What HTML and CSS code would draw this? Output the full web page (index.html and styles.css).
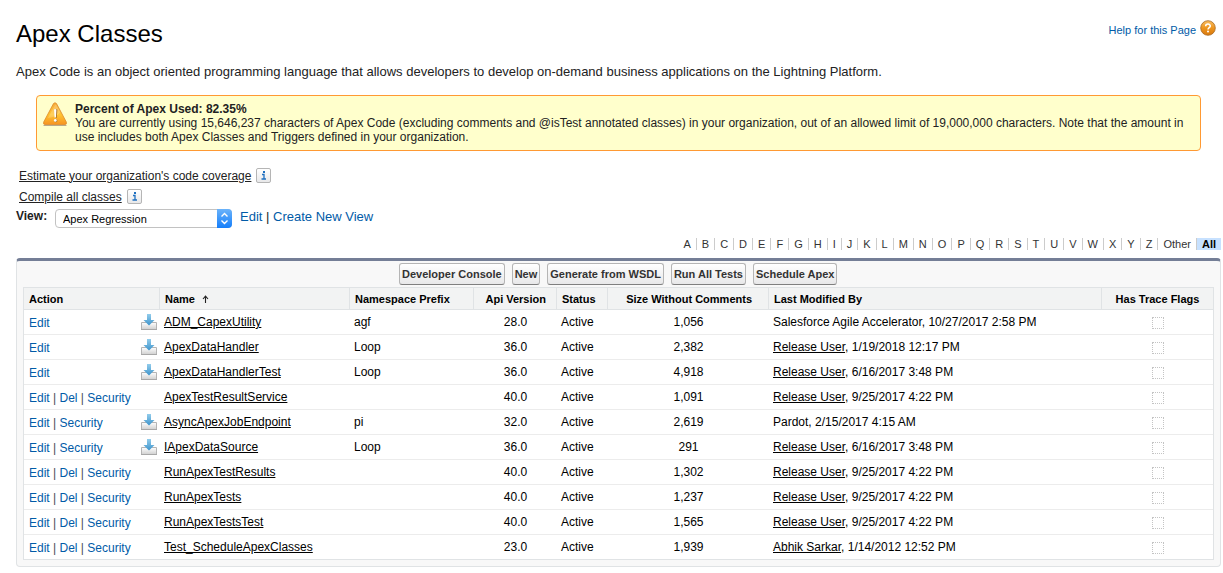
FILE: index.html
```html
<!DOCTYPE html>
<html lang="en">
<head>
<meta charset="utf-8">
<title>Apex Classes</title>
<link rel="stylesheet" href="styles.css">
</head>
<body>
<svg class="defs" width="0" height="0" aria-hidden="true">
  <defs>
    <linearGradient id="arrow-fill" x1="0" y1="0" x2="0" y2="1"><stop offset="0" stop-color="#93cdec"/><stop offset="1" stop-color="#3d94cc"/></linearGradient>
    <linearGradient id="tray-fill" x1="0" y1="0" x2="0" y2="1"><stop offset="0" stop-color="#ffffff"/><stop offset="1" stop-color="#cfcfcf"/></linearGradient>
    <symbol id="installed" viewBox="0 0 16 16">
      <path d="M.5 8.500H15.500V15.500H.5z" fill="url(#tray-fill)" stroke="#b4b4b4"/>
      <path d="M0 15.500H16" stroke="#a8a8a8"/>
      <path d="M6 0h4v6h3.500L8 11.500 2.500 6H6z" fill="url(#arrow-fill)"/>
    </symbol>
  </defs>
</svg>
<main class="page">
  <header class="page-head">
    <h1 class="title">Apex Classes</h1>
    <a class="help" href="#help">Help for this Page
      <svg class="help-icon" viewBox="0 0 16 16" aria-hidden="true">
        <defs><linearGradient id="help-fill" x1="0" y1="0" x2="0" y2="1"><stop offset="0" stop-color="#f8bd62"/><stop offset=".5" stop-color="#ed951f"/><stop offset="1" stop-color="#d9780c"/></linearGradient></defs>
        <circle cx="8" cy="8" r="7.300" fill="url(#help-fill)" stroke="#a86a24" stroke-width=".8"/>
        <path d="M5.700 6.200C5.700 3.400 10.300 3.400 10.300 6.100C10.300 7.700 8 7.700 8 9.500" fill="none" stroke="#fff" stroke-width="1.500"/>
        <circle cx="8" cy="11.600" r="1" fill="#fff"/>
      </svg>
    </a>
  </header>
  <p class="intro">Apex Code is an object oriented programming language that allows developers to develop on-demand business applications on the Lightning Platform.</p>
  <section class="warning">
    <svg class="warning-icon" viewBox="0 0 24 24" aria-hidden="true">
      <defs><linearGradient id="warn-fill" x1="0" y1="0" x2="0" y2="1"><stop offset="0" stop-color="#f6a93a"/><stop offset=".55" stop-color="#ffc431"/><stop offset="1" stop-color="#f79322"/></linearGradient></defs>
      <path d="M1 23.300H23" stroke="#b9a88a" stroke-width="1.200" stroke-linecap="round"/>
      <path d="M10.500 1.600Q12-.2 13.500 1.600L23.300 20Q24 22.500 22 22.500H2Q0 22.500.7 20z" fill="url(#warn-fill)" stroke="#dc8a2c" stroke-width=".8"/>
      <path d="M12 3L5 16Q13 15 17.500 10.500L13 2.500z" fill="#fff" opacity=".2"/>
      <path d="M11.600 7.500Q13 6.500 14.400 7.500L13.700 16H12.300z" fill="#a7722a"/>
      <path d="M11 7.500Q12.200 6.500 13.400 7.500L12.900 15.500H11.600z" fill="#fff"/>
      <circle cx="12.800" cy="18.700" r="1.600" fill="#a7722a"/><circle cx="12.300" cy="18.400" r="1.400" fill="#fff"/>
    </svg>
    <div class="warning-text"><strong>Percent of Apex Used: 82.35%</strong><br>You are currently using 15,646,237 characters of Apex Code (excluding comments and @isTest annotated classes) in your organization, out of an allowed limit of 19,000,000 characters. Note that the amount in use includes both Apex Classes and Triggers defined in your organization.</div>
  </section>
  <div class="tool-links">
    <div class="tool-link"><a href="#coverage">Estimate your organization's code coverage</a><button class="info" type="button" aria-label="About code coverage"><svg viewBox="0 0 13 13" aria-hidden="true"><path d="M5 5.500H7V10M4.500 10H9" fill="none" stroke="#1e6fc0" stroke-width="1.300"/><rect x="6" y="2" width="2" height="2" fill="#1e6fc0"/></svg></button></div>
    <div class="tool-link"><a href="#compile">Compile all classes</a><button class="info" type="button" aria-label="About compiling"><svg viewBox="0 0 13 13" aria-hidden="true"><path d="M5 5.500H7V10M4.500 10H9" fill="none" stroke="#1e6fc0" stroke-width="1.300"/><rect x="6" y="2" width="2" height="2" fill="#1e6fc0"/></svg></button></div>
  </div>
  <div class="view-bar">
    <label class="view-label" for="view">View:</label>
    <div class="picker">
      <select class="picker-select" id="view"><option>Apex Regression</option></select>
      <svg class="picker-arrows" viewBox="0 0 15 18" aria-hidden="true"><path d="M4.500 7L7.500 4L10.500 7M4.500 11L7.500 14L10.500 11" fill="none" stroke="#fff" stroke-width="1.400"/></svg>
    </div>
    <div class="view-actions"><a href="#edit">Edit</a> | <a href="#new">Create New View</a></div>
  </div>
  <nav class="rolodex">
    <a href="#A">A</a><a href="#B">B</a><a href="#C">C</a><a href="#D">D</a><a href="#E">E</a><a href="#F">F</a><a href="#G">G</a><a href="#H">H</a><a href="#I">I</a><a href="#J">J</a><a href="#K">K</a><a href="#L">L</a><a href="#M">M</a><a href="#N">N</a><a href="#O">O</a><a href="#P">P</a><a href="#Q">Q</a><a href="#R">R</a><a href="#S">S</a><a href="#T">T</a><a href="#U">U</a><a href="#V">V</a><a href="#W">W</a><a href="#X">X</a><a href="#Y">Y</a><a href="#Z">Z</a><a href="#other">Other</a><a class="current" href="#all">All</a>
  </nav>
  <section class="panel">
    <div class="buttons">
      <button class="btn" type="button">Developer Console</button>
      <button class="btn" type="button">New</button>
      <button class="btn" type="button">Generate from WSDL</button>
      <button class="btn" type="button">Run All Tests</button>
      <button class="btn" type="button">Schedule Apex</button>
    </div>
    <table class="classes">
      <colgroup><col class="w-action"><col class="w-name"><col class="w-prefix"><col class="w-api"><col class="w-status"><col class="w-size"><col><col class="w-trace"></colgroup>
      <thead>
        <tr><th>Action</th><th>Name<svg class="sort" viewBox="0 0 7 8" aria-hidden="true"><path d="M3.500 8V1.500M1 4L3.500 1.200L6 4" fill="none" stroke="#222" stroke-width="1.100"/></svg></th><th>Namespace Prefix</th><th class="num">Api Version</th><th>Status</th><th class="num">Size Without Comments</th><th>Last Modified By</th><th class="mid">Has Trace Flags</th></tr>
      </thead>
      <tbody>
        <tr><td class="action"><div class="acts"><span><a href="#e">Edit</a></span><svg class="pkg" role="img" aria-label="Installed"><use href="#installed"/></svg></div></td><td><a href="#c">ADM_CapexUtility</a></td><td>agf</td><td class="mid">28.0</td><td>Active</td><td class="mid">1,056</td><td>Salesforce Agile Accelerator, 10/27/2017 2:58 PM</td><td class="mid"><input class="flag" type="checkbox" disabled aria-label="Has trace flags"></td></tr>
        <tr><td class="action"><div class="acts"><span><a href="#e">Edit</a></span><svg class="pkg" role="img" aria-label="Installed"><use href="#installed"/></svg></div></td><td><a href="#c">ApexDataHandler</a></td><td>Loop</td><td class="mid">36.0</td><td>Active</td><td class="mid">2,382</td><td><a href="#u">Release User</a>, 1/19/2018 12:17 PM</td><td class="mid"><input class="flag" type="checkbox" disabled aria-label="Has trace flags"></td></tr>
        <tr><td class="action"><div class="acts"><span><a href="#e">Edit</a></span><svg class="pkg" role="img" aria-label="Installed"><use href="#installed"/></svg></div></td><td><a href="#c">ApexDataHandlerTest</a></td><td>Loop</td><td class="mid">36.0</td><td>Active</td><td class="mid">4,918</td><td><a href="#u">Release User</a>, 6/16/2017 3:48 PM</td><td class="mid"><input class="flag" type="checkbox" disabled aria-label="Has trace flags"></td></tr>
        <tr><td class="action"><div class="acts"><span><a href="#e">Edit</a> | <a href="#d">Del</a> | <a href="#s">Security</a></span></div></td><td><a href="#c">ApexTestResultService</a></td><td></td><td class="mid">40.0</td><td>Active</td><td class="mid">1,091</td><td><a href="#u">Release User</a>, 9/25/2017 4:22 PM</td><td class="mid"><input class="flag" type="checkbox" disabled aria-label="Has trace flags"></td></tr>
        <tr><td class="action"><div class="acts"><span><a href="#e">Edit</a> | <a href="#s">Security</a></span><svg class="pkg" role="img" aria-label="Installed"><use href="#installed"/></svg></div></td><td><a href="#c">AsyncApexJobEndpoint</a></td><td>pi</td><td class="mid">32.0</td><td>Active</td><td class="mid">2,619</td><td>Pardot, 2/15/2017 4:15 AM</td><td class="mid"><input class="flag" type="checkbox" disabled aria-label="Has trace flags"></td></tr>
        <tr><td class="action"><div class="acts"><span><a href="#e">Edit</a> | <a href="#s">Security</a></span><svg class="pkg" role="img" aria-label="Installed"><use href="#installed"/></svg></div></td><td><a href="#c">IApexDataSource</a></td><td>Loop</td><td class="mid">36.0</td><td>Active</td><td class="mid">291</td><td><a href="#u">Release User</a>, 6/16/2017 3:48 PM</td><td class="mid"><input class="flag" type="checkbox" disabled aria-label="Has trace flags"></td></tr>
        <tr><td class="action"><div class="acts"><span><a href="#e">Edit</a> | <a href="#d">Del</a> | <a href="#s">Security</a></span></div></td><td><a href="#c">RunApexTestResults</a></td><td></td><td class="mid">40.0</td><td>Active</td><td class="mid">1,302</td><td><a href="#u">Release User</a>, 9/25/2017 4:22 PM</td><td class="mid"><input class="flag" type="checkbox" disabled aria-label="Has trace flags"></td></tr>
        <tr><td class="action"><div class="acts"><span><a href="#e">Edit</a> | <a href="#d">Del</a> | <a href="#s">Security</a></span></div></td><td><a href="#c">RunApexTests</a></td><td></td><td class="mid">40.0</td><td>Active</td><td class="mid">1,237</td><td><a href="#u">Release User</a>, 9/25/2017 4:22 PM</td><td class="mid"><input class="flag" type="checkbox" disabled aria-label="Has trace flags"></td></tr>
        <tr><td class="action"><div class="acts"><span><a href="#e">Edit</a> | <a href="#d">Del</a> | <a href="#s">Security</a></span></div></td><td><a href="#c">RunApexTestsTest</a></td><td></td><td class="mid">40.0</td><td>Active</td><td class="mid">1,565</td><td><a href="#u">Release User</a>, 9/25/2017 4:22 PM</td><td class="mid"><input class="flag" type="checkbox" disabled aria-label="Has trace flags"></td></tr>
        <tr><td class="action"><div class="acts"><span><a href="#e">Edit</a> | <a href="#d">Del</a> | <a href="#s">Security</a></span></div></td><td><a href="#c">Test_ScheduleApexClasses</a></td><td></td><td class="mid">23.0</td><td>Active</td><td class="mid">1,939</td><td><a href="#u">Abhik Sarkar</a>, 1/14/2012 12:52 PM</td><td class="mid"><input class="flag" type="checkbox" disabled aria-label="Has trace flags"></td></tr>
      </tbody>
    </table>
  </section>
</main>
</body>
</html>
```

FILE: styles.css
```css
* { box-sizing: border-box; }
body { margin: 0; background: #fff; color: #222; font: 12px/14px "Liberation Sans", Arial, sans-serif; }
a { color: #015ba7; text-decoration: none; }
.defs { position: absolute; }
.page { padding: 20px 2px 6px 16px; }
.page-head { display: flex; justify-content: space-between; align-items: flex-start; }
.title { margin: 0; font-size: 24px; line-height: 28px; font-weight: 400; color: #000; }
.help { display: flex; align-items: center; gap: 4px; padding-right: 5px; font-size: 11px; line-height: 16px; }
.help-icon { width: 16px; height: 16px; margin-bottom: 4px; }
.intro { margin: 16px 0 0; font-size: 13px; line-height: 16px; }
.warning { display: flex; gap: 8px; margin: 15px 20px 0; padding: 6px 12px 6px 6px; border: 1px solid #f93; border-radius: 4px; background: #ffc; }
.warning-icon { flex: none; width: 24px; height: 24px; }
.warning-text strong { color: #222; }
.tool-links { padding: 14px 3px 0; }
.tool-link { display: flex; align-items: center; gap: 5px; height: 21px; }
.tool-link a { color: #222; text-decoration: underline; }
.info { width: 15px; height: 15px; padding: 0; border: 1px solid #b5b5b5; border-radius: 2px; background: linear-gradient(#fff, #e8e8e9); }
.info svg { display: block; width: 13px; height: 13px; }
.view-bar { display: flex; height: 22px; }
.view-label { width: 39px; padding-top: 2px; font-weight: 700; }
.picker { position: relative; width: 177px; height: 19px; margin-top: 2px; }
.picker-select { width: 100%; height: 19px; padding: 0 20px 0 7px; border: 1px solid #c2c2c2; border-radius: 4px; background: #fff; color: #000; font: 11px "Liberation Sans", Arial, sans-serif; appearance: none; }
.picker-arrows { position: absolute; right: 0; top: 0; width: 15px; height: 19px; border-radius: 0 4px 4px 0; background: linear-gradient(#6bb3fa, #147efb); pointer-events: none; }
.view-actions { padding: 3px 0 0 8px; font-size: 13px; }
.rolodex { display: flex; justify-content: flex-end; padding-top: 9px; font-size: 11px; line-height: 12px; }
.rolodex a { padding: 0 5px; border-right: 1px solid #ccc; color: #333; }
.rolodex .current { border: 0; background: #c7e1ff; color: #000; font-weight: 700; }
.panel { margin-top: 8px; padding: 2px 6px 6px; border: 1px solid #e0e3e5; border-top: 3px solid #747e96; border-radius: 4px; background: #f8f8f8; }
.buttons { display: flex; gap: 7px; padding: 0 0 2px 376px; }
.btn { height: 22px; padding: 2px 2px; border: 1px solid #b5b5b5; border-bottom-color: #7f7f7f; border-radius: 3px; background: linear-gradient(#fff, #e8e8e9); color: #333; font: 700 11px "Liberation Sans", Arial, sans-serif; white-space: nowrap; }
.classes { width: 100%; border: 1px solid #e0e3e5; border-spacing: 0; table-layout: fixed; background: #fff; }
.w-action { width: 136px; }
.w-name { width: 190px; }
.w-prefix { width: 124px; }
.w-api { width: 83px; }
.w-status { width: 51px; }
.w-size { width: 161px; }
.w-trace { width: 111px; }
th, td { padding: 0 5px 0 4px; border-bottom: 1px solid #ececec; text-align: left; white-space: nowrap; }
th { height: 22px; padding-left: 5px; border-right: 1px solid #e0e3e5; border-bottom-color: #e0e3e5; background: #f2f3f3; color: #000; font-size: 11px; }
td { height: 25px; color: #000; }
td a { color: #000; text-decoration: underline; }
th:last-child { border-right: 0; }
tbody tr:last-child td { height: 24px; border-bottom: 0; }
.num { padding-right: 10px; text-align: right; }
.num:nth-child(6) { padding-right: 16px; }
.mid { padding-left: 5px; text-align: center; }
.action { padding: 0 3px 0 5px; color: #4a4a56; }
.acts { display: flex; justify-content: space-between; align-items: center; height: 24px; padding-top: 1px; }
.action a { color: #015ba7; text-decoration: none; }
.pkg { width: 16px; height: 16px; margin-bottom: 2px; }
.sort { width: 7px; height: 8px; margin-left: 7px; }
.flag { display: block; width: 12px; height: 12px; margin: 2px auto 0; border: 1px dotted #c4c4c4; background: #fff; appearance: none; }
```
